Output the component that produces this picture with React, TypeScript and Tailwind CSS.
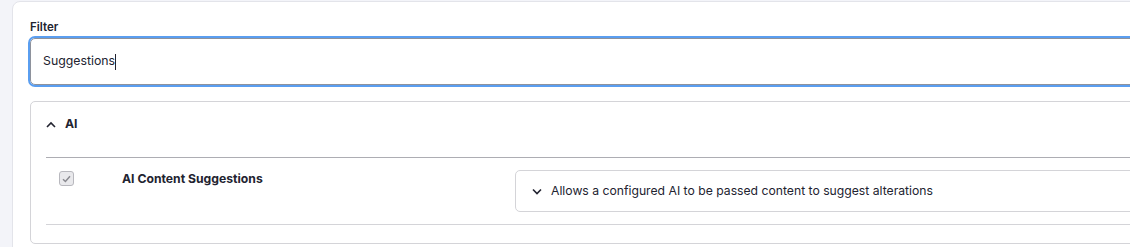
import React from "react";

function ChevronUp() {
  return (
    <svg width="10" height="7" viewBox="0 0 10 7" fill="none">
      <path d="M1 6L5 2L9 6" stroke="#222330" strokeWidth="1.6" />
    </svg>
  );
}

function ChevronDown() {
  return (
    <svg width="10" height="7" viewBox="0 0 10 7" fill="none">
      <path d="M1 1.5L5 5.5L9 1.5" stroke="#222330" strokeWidth="1.6" />
    </svg>
  );
}

export default function App() {
  return (
    <div
      className="w-[1130px] h-[247px] overflow-hidden bg-[#f3f4f9] pl-[12px] pt-[1px]"
      style={{ fontFamily: "Inter, 'Liberation Sans', sans-serif" }}
    >
      <div className="w-[1140px] h-[260px] bg-white border border-[#e3e4ea] rounded-tl-[8px] pl-[17px] pt-[16px] text-[#222330]">
        <div className="text-[11.5px] font-semibold leading-[18px] mb-[2px]">Filter</div>
        <div className="h-[47px] w-[1120px] rounded-[5px] border border-[#8e929c] outline-2 outline-[#5a9ef0] flex items-center pl-[12px] text-[12.3px]">
          <span>Suggestions</span>
          <span className="inline-block w-[1px] h-[16px] bg-[#222330]" />
        </div>
        <div className="mt-[16px] w-[1120px] h-[143px] border border-[#d4d4d8] rounded-[5px] pl-[15px]">
          <div className="h-[55px] flex items-start pt-[14px] gap-[9px]">
            <div className="h-[16px] flex items-center">
              <ChevronUp />
            </div>
            <span className="text-[12.2px] font-bold leading-[16px]">AI</span>
          </div>
          <div className="border-t border-[#adadb3] border-b border-b-[#d4d4d8] h-[68px] flex">
            <div className="w-[76px] shrink-0 pl-[13px] pt-[13px]">
              <div className="w-[15px] h-[15px] rounded-[3px] border border-[#b8b8be] bg-[#e9e9ec] flex items-center justify-center">
                <svg width="9" height="8" viewBox="0 0 9 8" fill="none">
                  <path d="M1 4.2L3.4 6.5L8 1.2" stroke="#8a8a90" strokeWidth="1.5" />
                </svg>
              </div>
            </div>
            <div className="w-[393px] shrink-0 pt-[13px] text-[12.2px] font-bold leading-[16px]">
              AI Content Suggestions
            </div>
            <div className="pt-[12px] shrink-0">
              <div className="w-[700px] h-[42px] border border-[#d4d4d8] rounded-[5px] flex items-center pl-[16px] gap-[9px] text-[12.2px]">
                <ChevronDown />
                <span>Allows a configured AI to be passed content to suggest alterations</span>
              </div>
            </div>
          </div>
        </div>
      </div>
    </div>
  );
}
